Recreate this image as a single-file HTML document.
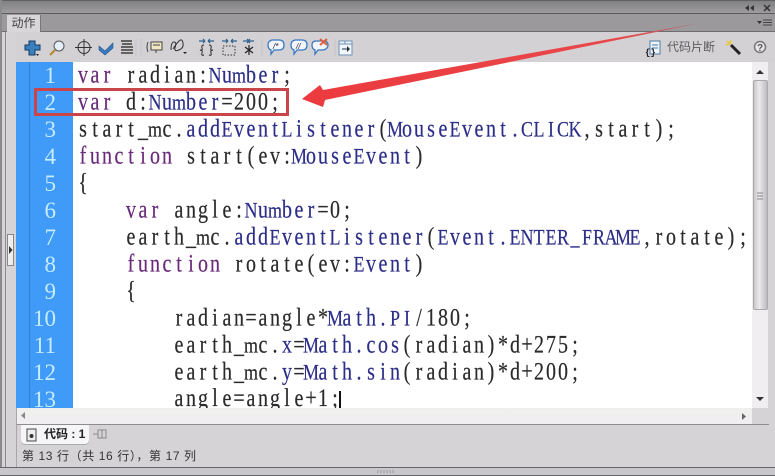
<!DOCTYPE html>
<html><head><meta charset="utf-8">
<style>
html,body{margin:0;padding:0}
body{width:775px;height:476px;overflow:hidden;position:relative;background:#d6d3d7;font-family:"Liberation Sans","Noto Sans CJK SC",sans-serif}
div{position:absolute;box-sizing:border-box}
svg{position:absolute;overflow:visible}
.code text{font-family:"Liberation Serif",serif;font-size:25px;fill:#2b2b2b;stroke:#2b2b2b;stroke-width:.2px;text-anchor:middle}
.code .k{fill:#6a2a7a;stroke:#6a2a7a}
.code .t{fill:#2c2e88;stroke:#2c2e88}
.code .c{font-size:22.5px}
.nums text{font-family:"Liberation Serif",serif;font-size:23px;fill:#c6ecff;text-anchor:end}
</style></head><body>
<!-- title bar -->
<div style="left:0;top:0;width:775px;height:14px;background:linear-gradient(#808083,#a09ea1);border-top:1px solid #606060"></div>
<div style="left:0;top:13px;width:775px;height:1px;background:#5c5c5e"></div>
<div style="left:0;top:14px;width:775px;height:18px;background:#9b999c"></div>
<div style="left:0;top:31px;width:775px;height:1px;background:#6e6e70"></div>
<div style="left:7px;top:15px;width:34px;height:17px;background:#d8d6d9;border-right:1px solid #777;font-size:12px;line-height:17px;color:#444;text-align:center">动作</div>
<svg style="left:0;top:0" width="775" height="32">
<path d="M749 5l-4 3 4 3zM754 5l-4 3 4 3z" fill="#333"/>
<path d="M764 5l6 6M770 5l-6 6" stroke="#333" stroke-width="1.500"/>
<path d="M757 21l5 0-2.500 3z" fill="#333"/>
<path d="M763 20h9M763 22.500h9M763 25h9" stroke="#444" stroke-width="1"/>
</svg>
<!-- left strip -->
<div style="left:0;top:32px;width:16px;height:435px;background:#d6d3d7"></div>
<div style="left:0;top:0;width:2px;height:476px;background:#8a8a8c"></div>
<div style="left:5px;top:32px;width:1px;height:435px;background:#8c8c8c"></div>
<div style="left:7px;top:234px;width:7px;height:32px;background:#eee;border:1px solid #888"></div>
<svg style="left:9px;top:246px" width="5" height="8"><path d="M0 0l3.500 4-3.500 4z" fill="#333"/></svg>
<!-- toolbar -->
<div style="left:16px;top:32px;width:759px;height:30px;background:#d4d1d5"></div>
<svg style="left:0;top:0" width="775" height="62" fill="none">
<path d="M29 41h6v4h5v5h-5v5h-6v-5h-4v-5h4z" fill="#3a7fc0" stroke="#123a60"/>
<path d="M36 54h3l-1.500 2z" fill="#222"/>
<circle cx="59" cy="46" r="5" fill="#e6eef8" stroke="#555"/><path d="M55 50l-5 5" stroke="#b48a2a" stroke-width="2"/>
<circle cx="84" cy="47.500" r="6" stroke="#333"/><path d="M84 39v17M75 47.500h17" stroke="#333"/>
<path d="M99 46l6 5 8-8v5l-8 7-6-5z" fill="#3a78c0" stroke="#26558c" stroke-width=".6"/>
<path d="M121 41h11M122 44h10M121 47h12M121 50h12M121 53h12" stroke="#222" stroke-width="1.200"/>
<path d="M148 42q-2 5 0 10" stroke="#444"/>
<rect x="151" y="42" width="11" height="8" stroke="#444" fill="#f0e6c0"/><path d="M153 45h7M156 50v3" stroke="#444"/>
<path d="M171 50q0-8 3-8t1 6q-1 4 4 2t4-7-4-2-6 8" stroke="#333"/><path d="M183 52h4l-2 2z" fill="#222"/>
<path d="M199 41h5M209 41h5M205 41l-2-2M205 41l-2 2M208 41l2-2M208 41l2 2" stroke="#2a5f90" stroke-width="1.200"/>
<path d="M204 45q-3 0-2 3t-2 2q3 0 2 3t2 2M209 45q3 0 2 3t2 2q-3 0-2 3t-2 2" stroke="#222"/>
<path d="M222 41h5M232 41h5M228 41l-2-2M228 41l-2 2M231 41l2-2M231 41l2 2" stroke="#2a5f90" stroke-width="1.200"/>
<rect x="223" y="46" width="12" height="9" stroke="#333" stroke-dasharray="1.500 1.500"/>
<path d="M243 41h5M254 41h-5M249 41l-2-2M249 41l-2 2M248 41l2-2M248 41l2 2" stroke="#2a5f90" stroke-width="1.200"/>
<path d="M249 45v10M245 47l8 6M253 47l-8 6" stroke="#222" stroke-width="1.200"/>
<g fill="#f2f6fb" stroke="#3a78c0" stroke-width="1.300">
<path d="M272 40h7q5 0 5 5t-5 5h-5l-3 4v-4q-3-1-3-5t4-5z"/>
<path d="M295 40h7q5 0 5 5t-5 5h-5l-3 4v-4q-3-1-3-5t4-5z"/>
<path d="M316 41h7q5 0 5 4t-5 5h-5l-3 4v-4q-3-1-3-5t4-4z"/>
</g>
<text x="273" y="49" font-family="Liberation Sans" font-size="8" font-style="italic" fill="#223">/*</text>
<text x="296" y="49" font-family="Liberation Sans" font-size="8" font-style="italic" fill="#223">//</text>
<path d="M320 39l7 6M327 39l-7 6" stroke="#e0603a" stroke-width="2"/>
<rect x="339" y="41" width="13" height="14" fill="#f2f6fb" stroke="#6a93b8"/><path d="M339 44h13M345 41v3" stroke="#6a93b8"/><path d="M342 49h6" stroke="#234"/><path d="M347 46l3 3-3 3z" fill="#234"/>
<path d="M136 39v17M141 39v17M262 39v17M335 39v17" stroke="#c4c2c6"/>
<rect x="650" y="41" width="10" height="13" fill="#eef3fa" stroke="#4a7ea8"/><path d="M652 45h6M652 48h6" stroke="#4a7ea8"/>
<text x="645" y="55" font-family="Liberation Mono" font-size="9" font-weight="bold" fill="#222">{}</text>
<path d="M731 45l9 9" stroke="#222" stroke-width="3"/><path d="M727 41l4 3M731 40l-1 4M726 45l4-1" stroke="#e8c93a" stroke-width="1.500"/>
<circle cx="760" cy="47" r="5.500" fill="#e6e6e8" stroke="#777" stroke-width="1.500"/>
<text x="757" y="51" font-family="Liberation Sans" font-size="10" font-weight="bold" fill="#555">?</text>
</svg>
<div style="left:667px;top:39px;font-size:12px;line-height:17px;color:#5c5c5e;white-space:nowrap">代码片断</div>
<!-- editor -->
<div style="left:16px;top:62px;width:736px;height:346px;background:#fff"></div>
<div style="left:16px;top:62px;width:57px;height:346px;background:#3f9bf7"></div>
<div style="left:29px;top:62px;width:1px;height:346px;background:#2d83dc"></div>
<svg style="left:0;top:0;overflow:hidden" width="752" height="408">
<g class="nums">
<text x="56" y="83">1</text><text x="56" y="110">2</text><text x="56" y="137">3</text><text x="56" y="164">4</text><text x="56" y="191">5</text><text x="56" y="218">6</text><text x="56" y="245">7</text><text x="56" y="272">8</text><text x="56" y="299">9</text><text x="56" y="326">10</text><text x="56" y="353">11</text><text x="56" y="380">12</text><text x="56" y="407">13</text>
</g>
<g class="code" transform="translate(-1 -.5) scale(.8 1)">
<text y="83" x="105 120 135 150 165 180 195 210 225 240 255 270 285 300 315 330 345 360 375 390 405 420 435 450 465"><tspan class="k">var</tspan> radian:<tspan class="t"><tspan class="c">N</tspan>u<tspan class="c">m</tspan>ber</tspan>;</text>
<text y="110" x="105 120 135 150 165 180 195 210 225 240 255 270 285 300 315 330 345 360 375 390 405 420 435 450 465"><tspan class="k">var</tspan> d:<tspan class="t"><tspan class="c">N</tspan>u<tspan class="c">m</tspan>ber</tspan>=200;</text>
<text y="137" x="105 120 135 150 165 180 195 210 225 240 255 270 285 300 315 330 345 360 375 390 405 420 435 450 465 480 495 510 525 540 555 570 585 600 615 630 645 660 675 690 705 720 735 750 765 780 795 810 825 840">start_<tspan class="c">m</tspan>c.<tspan class="t">add<tspan class="c">E</tspan>vent<tspan class="c">L</tspan>istener</tspan>(<tspan class="t"><tspan class="c">M</tspan>ouse<tspan class="c">E</tspan>vent.<tspan class="c">CLICK</tspan></tspan>,start);</text>
<text y="164" x="105 120 135 150 165 180 195 210 225 240 255 270 285 300 315 330 345 360 375 390 405 420 435 450 465 480 495 510 525 540 555 570 585 600"><tspan class="k">function</tspan> start(ev:<tspan class="t"><tspan class="c">M</tspan>ouse<tspan class="c">E</tspan>vent</tspan>)</text>
<text y="191" x="105">{</text>
<text y="218" transform="translate(60 0)" x="105 120 135 150 165 180 195 210 225 240 255 270 285 300 315 330 345 360 375 390 405 420 435 450 465"><tspan class="k">var</tspan> angle:<tspan class="t"><tspan class="c">N</tspan>u<tspan class="c">m</tspan>ber</tspan>=0;</text>
<text y="245" transform="translate(60 0)" x="105 120 135 150 165 180 195 210 225 240 255 270 285 300 315 330 345 360 375 390 405 420 435 450 465 480 495 510 525 540 555 570 585 600 615 630 645 660 675 690 705 720 735 750 765 780 795 810 825 840 855 870">earth_<tspan class="c">m</tspan>c.<tspan class="t">add<tspan class="c">E</tspan>vent<tspan class="c">L</tspan>istener</tspan>(<tspan class="t"><tspan class="c">E</tspan>vent.<tspan class="c">ENTER_FRAME</tspan></tspan>,rotate);</text>
<text y="272" transform="translate(60 0)" x="105 120 135 150 165 180 195 210 225 240 255 270 285 300 315 330 345 360 375 390 405 420 435 450 465 480 495 510 525 540"><tspan class="k">function</tspan> rotate(ev:<tspan class="t"><tspan class="c">E</tspan>vent</tspan>)</text>
<text y="299" transform="translate(60 0)" x="105">{</text>
<text y="326" transform="translate(120 0)" x="105 120 135 150 165 180 195 210 225 240 255 270 285 300 315 330 345 360 375 390 405 420 435 450 465 480 495 510 525 540">radian=angle*<tspan class="t"><tspan class="c">M</tspan>ath.<tspan class="c">PI</tspan></tspan>/180;</text>
<text y="353" transform="translate(120 0)" x="105 120 135 150 165 180 195 210 225 240 255 270 285 300 315 330 345 360 375 390 405 420 435 450 465 480 495 510 525 540 555 570 585 600 615 630 645 660 675 690 705 720">earth_<tspan class="c">m</tspan>c.<tspan class="t">x</tspan>=<tspan class="t"><tspan class="c">M</tspan>ath.cos</tspan>(radian)*d+275;</text>
<text y="380" transform="translate(120 0)" x="105 120 135 150 165 180 195 210 225 240 255 270 285 300 315 330 345 360 375 390 405 420 435 450 465 480 495 510 525 540 555 570 585 600 615 630 645 660 675 690 705 720">earth_<tspan class="c">m</tspan>c.<tspan class="t">y</tspan>=<tspan class="t"><tspan class="c">M</tspan>ath.sin</tspan>(radian)*d+200;</text>
<text y="406.500" transform="translate(120 0)" x="105 120 135 150 165 180 195 210 225 240 255 270 285 300">angle=angle+1;</text>
</g>
</svg>
<div style="left:339px;top:391px;width:2px;height:17px;background:#111"></div>
<!-- vertical scrollbar -->
<div style="left:752px;top:62px;width:16px;height:346px;background:#f0eef1"></div>
<div style="left:753px;top:80px;width:15px;height:230px;background:linear-gradient(90deg,#c9c7cb,#eceaed 40%,#bdbbc0);border:1px solid #aaa;border-radius:2px"></div>
<svg style="left:752px;top:62px" width="16" height="346">
<path d="M4 12l4-4 4 4z" fill="#333"/><path d="M4 335l8 0-4 4z" fill="#333"/>
<path d="M5 131h6M5 134h6M5 137h6" stroke="#888"/>
</svg>
<div style="left:768px;top:62px;width:7px;height:346px;background:#d6d3d7"></div>
<!-- hscroll -->
<div style="left:16px;top:408px;width:736px;height:16px;background:linear-gradient(#eff0ee,#f1eef2)"></div>
<svg style="left:16px;top:408px" width="736" height="16"><path d="M9 4l-4 3.500 4 3.500z" fill="#888"/><path d="M726 5l4 3.500-4 3.500z" fill="#666"/></svg>
<div style="left:752px;top:408px;width:23px;height:16px;background:#d6d3d7"></div>
<div style="left:16px;top:424px;width:753px;height:1px;background:#8e8c90"></div>
<div style="left:16px;top:408px;width:1px;height:59px;background:#a8a6aa"></div>
<!-- tabs -->
<div style="left:21px;top:425px;width:68px;height:19px;background:#f6f5f7;border-radius:0 0 4px 4px;box-shadow:0 1px 0 #aaa"></div>
<svg style="left:26px;top:428px" width="12" height="14"><rect x="1" y="1" width="9" height="12" fill="#eee" stroke="#444"/><circle cx="5.500" cy="8" r="2" fill="#333"/></svg>
<div style="left:44px;top:426px;font-size:12px;font-weight:bold;line-height:17px;color:#222;white-space:nowrap">代码 : 1</div>
<svg style="left:92px;top:427px" width="16" height="14" fill="none"><path d="M1 7h5M6 3h8v8H6z M10 3v8" stroke="#8a8a8a"/></svg>
<div style="left:22px;top:448px;font-size:12px;letter-spacing:.6px;line-height:16px;color:#333;white-space:nowrap">第 13 行（共 16 行），第 17 列</div>
<div style="left:0;top:467px;width:775px;height:1px;background:#66666a"></div>
<div style="left:0;top:468px;width:775px;height:7px;background:#c9c7cb"></div>
<div style="left:0;top:475px;width:775px;height:1px;background:#66666a"></div>
<svg style="left:378px;top:470px" width="20" height="4"><path d="M0 0v3M3 0v3M6 0v3M9 0v3M12 0v3M15 0v3" stroke="#999"/></svg>
<!-- annotation -->
<svg style="left:0;top:0" width="775" height="476">
<defs><linearGradient id="ar" gradientUnits="userSpaceOnUse" x1="300" y1="0" x2="700" y2="0"><stop offset="0" stop-color="#ec3a3e"/><stop offset=".8" stop-color="#e8474a"/><stop offset="1" stop-color="#b06a6c"/></linearGradient></defs>
<rect x="35.500" y="89.500" width="252" height="25" fill="none" stroke="#c9454a" stroke-width="3"/>
<path d="M302 99 L320 85 L323 90 L700 23 L325 100 L323 107 Z" fill="url(#ar)"/>
</svg>
</body></html>
